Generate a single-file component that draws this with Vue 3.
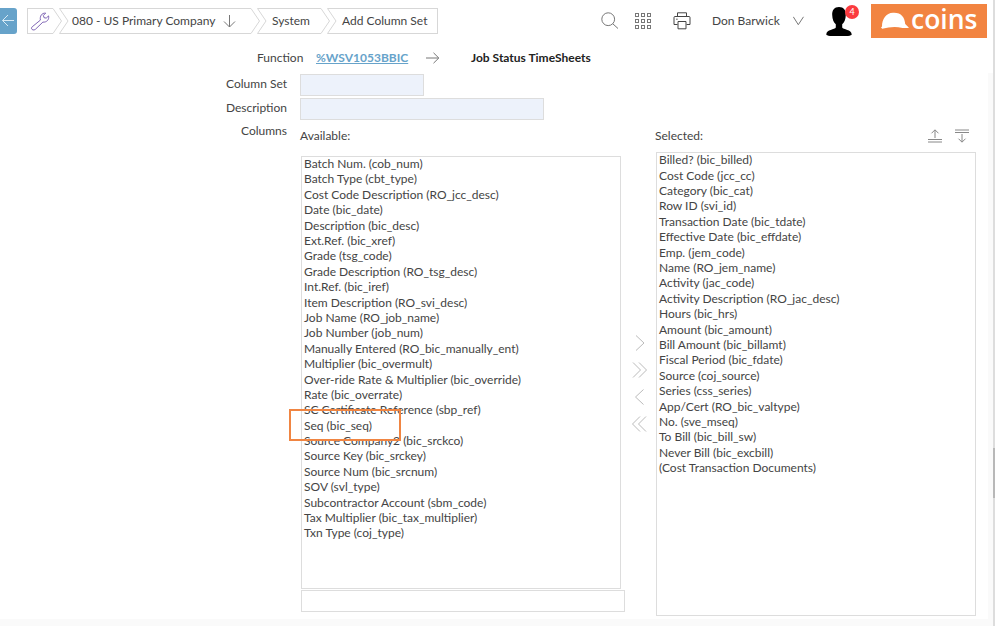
<script setup>
const available = [
  'Batch Num. (cob_num)', 'Batch Type (cbt_type)', 'Cost Code Description (RO_jcc_desc)', 'Date (bic_date)',
  'Description (bic_desc)', 'Ext.Ref. (bic_xref)', 'Grade (tsg_code)', 'Grade Description (RO_tsg_desc)',
  'Int.Ref. (bic_iref)', 'Item Description (RO_svi_desc)', 'Job Name (RO_job_name)', 'Job Number (job_num)',
  'Manually Entered (RO_bic_manually_ent)', 'Multiplier (bic_overmult)', 'Over-ride Rate & Multiplier (bic_override)',
  'Rate (bic_overrate)', 'SC Certificate Reference (sbp_ref)', 'Seq (bic_seq)', 'Source Company2 (bic_srckco)',
  'Source Key (bic_srckey)', 'Source Num (bic_srcnum)', 'SOV (svl_type)', 'Subcontractor Account (sbm_code)',
  'Tax Multiplier (bic_tax_multiplier)', 'Txn Type (coj_type)',
]
const selected = [
  'Billed? (bic_billed)', 'Cost Code (jcc_cc)', 'Category (bic_cat)', 'Row ID (svi_id)', 'Transaction Date (bic_tdate)',
  'Effective Date (bic_effdate)', 'Emp. (jem_code)', 'Name (RO_jem_name)', 'Activity (jac_code)',
  'Activity Description (RO_jac_desc)', 'Hours (bic_hrs)', 'Amount (bic_amount)', 'Bill Amount (bic_billamt)',
  'Fiscal Period (bic_fdate)', 'Source (coj_source)', 'Series (css_series)', 'App/Cert (RO_bic_valtype)',
  'No. (sve_mseq)', 'To Bill (bic_bill_sw)', 'Never Bill (bic_excbill)', '(Cost Transaction Documents)',
]
const movers = ['M6 1.5L14 9L6 16.5', 'M3 1.5L10.5 9L3 16.5M9 1.5L16.5 9L9 16.5', 'M13.5 1.5L5.5 9L13.5 16.5', 'M10 1.5L2.5 9L10 16.5M16 1.5L8.5 9L16 16.5']
const sep = 'M0 .5L8.5 13L0 25.5M16 .5H6.5L15 13L6.5 25.5H16'
const cells = [0, 6, 12]
</script>

<template>
  <div class="page">
    <header class="top">
      <button class="back"><svg width="17" height="26" viewBox="0 0 17 26"><path d="M14 12.5H2.5M8 7L2.5 12.5L8 18" /></svg></button>
      <nav class="crumbs">
        <div class="crumb tool">
          <svg width="20" height="20" viewBox="0 0 20 20"><path d="M2.2 15.8L10.4 9.1C9.7 5.2 11.7 1.8 15.7 2.1L13.4 4.4L14 6.7L16.2 7.1L18.6 4.9C19.4 8.9 16.4 11.5 12.9 11.1L5.3 18.4C3 20.1.1 17.8 2.2 15.8Z" /></svg>
        </div>
        <svg class="sep" width="16" height="26"><path :d="sep" /></svg>
        <div class="crumb company">
          <span>080 - US Primary Company</span>
          <svg width="14" height="14" viewBox="0 0 14 14"><path d="M6.5 1V13M1 7.5L6.5 13L12 7.5" /></svg>
        </div>
        <svg class="sep" width="16" height="26"><path :d="sep" /></svg>
        <div class="crumb system">System</div>
        <svg class="sep" width="16" height="26"><path :d="sep" /></svg>
        <div class="crumb last">Add Column Set</div>
      </nav>
      <div class="tools">
        <svg class="search" width="18" height="18" viewBox="0 0 18 18"><circle cx="7.2" cy="7.2" r="6.4" /><path d="M11.8 11.8L17 16.5" /></svg>
        <svg class="grid" width="17" height="17" viewBox="0 0 17 17"><g v-for="y in cells" :key="y"><rect v-for="x in cells" :key="x" :x="x + .5" :y="y + .5" width="3" height="3" /></g></svg>
        <svg class="print" width="18" height="18" viewBox="0 0 18 18"><path d="M4.5 4.5V.8H13.5V4.5M4.5 12.5H1V5.5Q1 4.5 2 4.5H16Q17 4.5 17 5.5V12.5H13.5M5 9.5H13V16.8H5ZM3.2 7.2H4.6" /></svg>
        <span class="user">Don Barwick</span>
        <svg class="caret" width="12" height="10" viewBox="0 0 12 10"><path d="M.3.8L5.3 8.7L10.5.8" /></svg>
        <div class="avatar">
          <svg width="26" height="30" viewBox="0 0 26 30"><path d="M13 0C17.7 0 20 3 19.8 8C19.7 12.5 18.2 15.6 16.2 17.2V20.5C17 22.5 25.7 22.5 25.7 27.5Q25.7 28.4 22 29H4Q.3 28.4.3 27.5C.3 22.5 9 22.5 9.8 20.5V17.2C7.8 15.6 6.3 12.5 6.2 8C6 3 8.3 0 13 0Z" /></svg>
          <b>4</b>
        </div>
        <div class="logo">
          <svg width="29" height="18" viewBox="0 0 29 18"><path d="M1 14.5C1 7 5 1 12 .7C20 .2 23.7 5 24.2 12L28 15.8Q25 16.3 21.5 15.9Q14 14.3 7.5 15.6L1.2 16.8L0 15.4Z" /></svg>
          <span>coins</span>
        </div>
      </div>
    </header>

    <div class="function">
      <span class="fn-label">Function</span>
      <a>%WSV1053BBIC</a>
      <svg width="14" height="12" viewBox="0 0 14 12"><path d="M0 6H12.7M7.5 .8L12.8 6L7.5 11.2" /></svg>
      <strong>Job Status TimeSheets</strong>
    </div>

    <main class="content">
      <div class="form">
        <div class="row"><label>Column Set</label><input class="short"></div>
        <div class="row"><label>Description</label><input class="long"></div>
        <div class="row columns">
          <label>Columns</label>
          <section class="left">
            <h2>Available:</h2>
            <ul class="list"><li v-for="item in available" :key="item">{{ item }}</li></ul>
            <input class="filter">
            <div class="highlight"></div>
          </section>
          <div class="movers"><svg v-for="d in movers" :key="d" width="18" height="18"><path :d="d" /></svg></div>
          <section class="right">
            <div class="heading">
              <h2>Selected:</h2>
              <svg width="14" height="14" viewBox="0 0 14 14"><path d="M7 9V1M3.5 4.3L7 .8L10.5 4.3M0 10.5H14M0 13H14" /></svg>
              <svg width="14" height="14" viewBox="0 0 14 14"><path d="M7 5V13M3.5 9.7L7 13.2L10.5 9.7M0 1H14M0 3.5H14" /></svg>
            </div>
            <ul class="list"><li v-for="item in selected" :key="item">{{ item }}</li></ul>
          </section>
        </div>
      </div>
    </main>
    <div class="scrollbar"><i></i></div>
  </div>
</template>

<style>
body { margin: 0; overflow: hidden; }
</style>

<style scoped>
* { box-sizing: border-box; }
.page { position: relative; width: 995px; height: 626px; background: #fff; color: #444; font: 12px/16px Lato, Carlito, sans-serif; overflow: hidden; }
svg { display: block; flex: none; fill: none; stroke: #777; stroke-width: 1; }
.top { display: flex; height: 46px; padding-top: 8px; }
.back { width: 17px; height: 26px; padding: 0; border: 0; border-radius: 0 3px 3px 0; background: #67a3ca; }
.back svg { stroke: #d8eaf5; }
.crumbs { display: flex; height: 26px; margin-left: 10px; }
.crumb { display: flex; align-items: center; border: solid #d7d7d7; border-width: 1px 0; white-space: nowrap; }
.crumb.tool { width: 26px; border-left-width: 1px; padding-left: 2px; }
.tool svg { stroke: #8066b5; }
.sep { stroke: #d7d7d7; }
.company { width: 182px; padding-left: 3px; }
.company span { width: 151px; }
.system { width: 54px; padding-left: 5px; }
.crumb.last { width: 101px; padding-left: 5px; border-right-width: 1px; }
.tools { display: flex; margin-left: auto; }
.search { margin: 4px 16px 0 0; }
.grid { margin: 5px 21px 0 0; }
.print { margin: 4px 21px 0 0; stroke: #444; }
.user { width: 81px; margin-top: 5px; white-space: nowrap; }
.caret { margin-top: 8px; }
.avatar { position: relative; width: 33px; margin: -1px 12px 0 21px; }
.avatar svg { fill: #000; stroke: none; }
.avatar b { position: absolute; left: 19px; top: -2px; width: 14px; height: 14px; border-radius: 50%; background: #fb3b3f; color: #fff; font-size: 9px; line-height: 13px; text-align: center; font-weight: 400; }
.logo { display: flex; width: 116px; height: 34px; margin: -4px 8px 0 0; padding-left: 10px; background: #f28441; color: #fff; }
.logo svg { margin-top: 8px; fill: #fff; stroke: none; }
.logo span { margin-left: 1px; font: 600 26.5px/30px "Open Sans", sans-serif; }
.function { display: flex; height: 27px; padding: 4px 0 0 257px; }
.fn-label { width: 59px; }
.function a { width: 110px; color: #67a3ca; font-weight: 700; text-decoration: underline; }
.function svg { margin-top: 2px; }
.function strong { margin-left: 31px; color: #222; }
.content { width: 993px; height: 553px; background: #fafafa; }
.form { width: 988px; height: 546px; padding-top: 1px; background: #fff; }
.row { display: flex; height: 24px; }
.row label { width: 287px; margin-right: 13px; padding-top: 2px; text-align: right; }
input { height: 22px; padding: 0; border: 1px solid #ddd; border-radius: 0; background: #edf2fb; }
.short { width: 124px; }
.long { width: 244px; }
.row.columns { height: 497px; }
.columns label { padding-top: 1px; }
.left { position: relative; width: 325px; padding-top: 6px; }
h2 { margin: 0; font-size: 12px; line-height: 16px; font-weight: 400; }
.list { width: 320px; margin: 0; padding: 0 2px; border: 1px solid #ddd; list-style: none; white-space: nowrap; line-height: 15.385px; }
.left .list { height: 433px; margin: 12px 0 0 1px; }
.left li:first-child { margin-top: -.95px; }
.right li:first-child { margin-top: -.76px; }
.filter { display: block; width: 324px; margin: 1px 0 0 1px; background: #fff; }
.highlight { position: absolute; left: -11px; top: 287px; width: 112px; height: 32px; border: 2px solid #f08542; }
.movers { display: flex; flex-direction: column; gap: 9px; width: 30px; padding: 212px 0 0 5px; }
.movers svg { stroke: #bbb; }
.right { padding-top: 6px; }
.heading { display: flex; height: 24px; }
.heading h2 { width: 273px; }
.heading svg { margin: 1px 13px 0 0; stroke: #888; }
.right .list { height: 464px; margin-left: 1px; }
.scrollbar { position: absolute; top: 0; right: 0; width: 2px; height: 626px; padding-top: 448px; background: #ddd; }
.scrollbar i { display: block; height: 50px; background: #b8b8b8; }
</style>
